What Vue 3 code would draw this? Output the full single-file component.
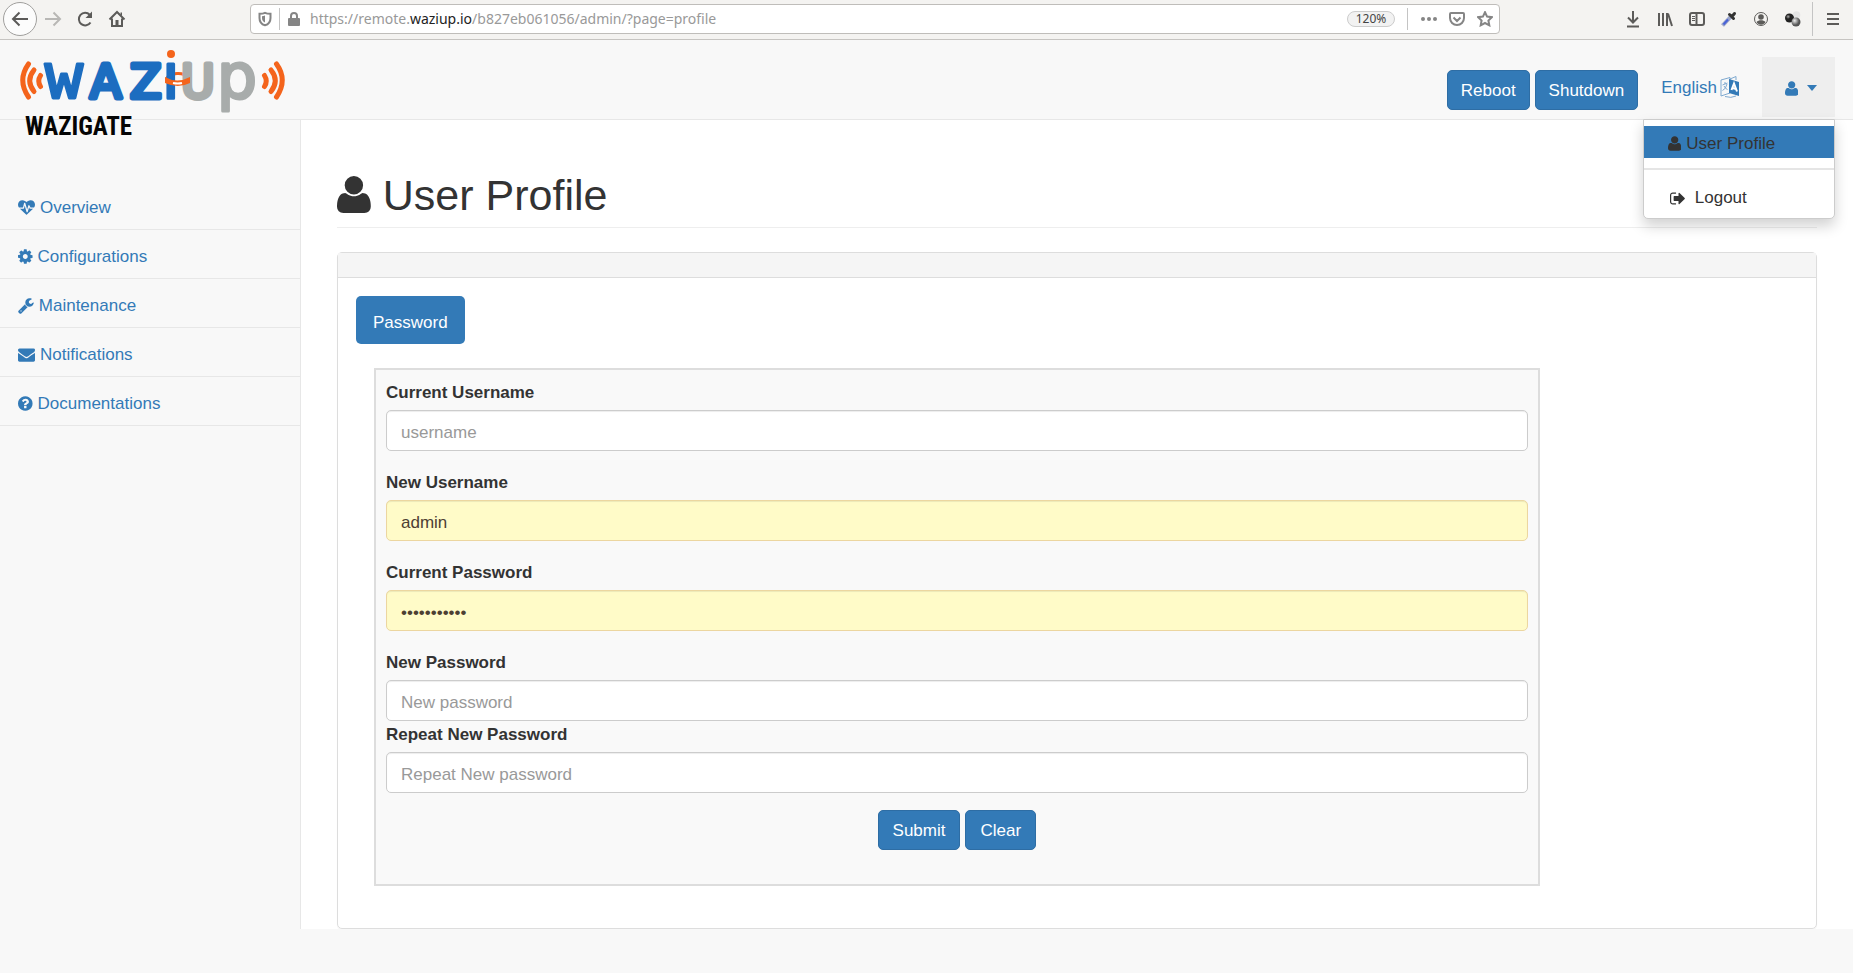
<script setup>
import { ref } from 'vue'

const icons = {
  user: {
    box: '192 0 1408 1792',
    d: 'M1600 1405q0 120-73 189.500t-194 69.500h-874q-121 0-194-69.500t-73-189.500q0-53 3.500-103.500t14-109 26.500-108.500 43-97.500 62-81 85.500-53.500 111.500-20q9 0 42 21.500t74.500 48 108 48 133.500 21.500 133.500-21.500 108-48 74.500-48 42-21.500q61 0 111.500 20t85.500 53.500 62 81 43 97.500 26.500 108.500 14 109 3.500 103.500zm-320-893q0 159-112.500 271.500t-271.500 112.500-271.500-112.500-112.500-271.500 112.500-271.500 271.500-112.500 271.500 112.500 112.500 271.500z',
  },
  logout: {
    box: '64 0 1664 1792',
    d: 'M704 1440q0 4 1 20t.5 26.5-3 23.5-10 19.5-20.5 6.5h-320q-119 0-203.5-84.5t-84.5-203.5v-704q0-119 84.5-203.5t203.5-84.5h320q13 0 22.5 9.5t9.5 22.5q0 4 1 20t.5 26.5-3 23.5-10 19.5-20.5 6.5h-320q-66 0-113 47t-47 113v704q0 66 47 113t113 47h312l11.5 1 11.5 3 8 5.5 7 9 2 13.5zm928-544q0 26-19 45l-544 544q-19 19-45 19t-45-19-19-45v-288h-448q-26 0-45-19t-19-45v-384q0-26 19-45t45-19h448v-288q0-26 19-45t45-19 45 19l544 544q19 19 19 45z',
  },
}

const links = [
  {
    label: 'Overview',
    box: '0 0 1792 1792',
    d: 'M1280 1024h305q-5 6-10 10.5t-9 7.5l-3 4-623 600q-18 18-44 18t-44-18l-624-602q-5-2-21-20h369q22 0 39.5-13.5t22.5-34.5l70-281 190 667q6 20 23 33t39 13q21 0 38-13t23-33l146-485 56 112q18 35 57 35zm512-428q0 145-103 300h-369l-111-221q-8-17-25.5-27t-36.5-8q-45 5-56 46l-129 430-196-686q-6-20-23.5-33t-39.5-13-39 13.5-22 34.5l-116 464h-423q-103-155-103-300 0-220 127-344t351-124q62 0 126.5 21.5t120 58 95.5 68.5 76 68q36-36 76-68t95.5-68.5 120-58 126.5-21.5q224 0 351 124t127 344z',
  },
  {
    label: 'Configurations',
    box: '128 0 1536 1792',
    d: 'M1152 896q0-106-75-181t-181-75-181 75-75 181 75 181 181 75 181-75 75-181zm512-109v222q0 12-8 23t-20 13l-185 28q-19 54-39 91 35 50 107 138 10 12 10 25t-9 23q-27 37-99 108t-94 71q-12 0-26-9l-138-108q-44 23-91 38-16 136-29 186-7 28-36 28h-222q-14 0-24.5-8.5t-11.5-21.5l-28-184q-49-16-90-37l-141 107q-10 9-25 9-14 0-25-11-126-114-165-168-7-10-7-23 0-12 8-23 15-21 51-66.5t54-70.5q-27-50-41-99l-183-27q-13-2-21-12.5t-8-23.5v-222q0-12 8-23t19-13l186-28q14-46 39-92-40-57-107-138-10-12-10-24 0-10 9-23 26-36 98.5-107.5t94.5-71.5q13 0 26 10l138 107q44-23 91-38 16-136 29-186 7-28 36-28h222q14 0 24.5 8.5t11.5 21.5l28 184q49 16 90 37l142-107q9-9 24-9 13 0 25 10 129 119 165 170 7 8 7 22 0 12-8 23-15 21-51 66.5t-54 70.5q26 50 41 98l183 28q13 2 21 12.5t8 23.5z',
  },
  {
    label: 'Maintenance',
    box: '64 0 1664 1792',
    d: 'M448 1472q0-26-19-45t-45-19-45 19-19 45 19 45 45 19 45-19 19-45zm644-420l-682 682q-37 37-90 37-52 0-91-37l-106-108q-38-36-38-90 0-53 38-91l681-681q39 98 114.5 173.5t173.5 114.5zm634-435q0 39-23 106-47 134-164.5 217.5t-258.5 83.5q-185 0-316.5-131.5t-131.5-316.5 131.5-316.5 316.5-131.5q58 0 121.5 16.5t107.5 46.5q16 11 16 28t-16 28l-293 169v224l193 107q5-3 79-48.5t135.5-81 70.5-35.5q15 0 23.5 10t8.5 25z',
  },
  {
    label: 'Notifications',
    box: '0 0 1792 1792',
    d: 'M1792 710v794q0 66-47 113t-113 47h-1472q-66 0-113-47t-47-113v-794q44 49 101 87 362 246 497 345 57 42 92.5 65.5t94.5 48 110 24.5h2q51 0 110-24.5t94.5-48 92.5-65.5q170-123 498-345 57-39 100-87zm0-294q0 79-49 151t-122 123q-376 261-468 325-10 7-42.5 31t-54 38.5-52 32.5-57.5 27-50 9h-2q-23 0-50-9t-57.5-27-52-32.5-54-38.5-42.5-31q-91-64-262-182.5t-205-142.5q-62-42-117-115.5t-55-136.5q0-78 41.5-130t118.5-52h1472q65 0 112.5 47t47.5 113z',
  },
  {
    label: 'Documentations',
    box: '128 0 1536 1792',
    d: 'M1024 1376v-192q0-14-9-23t-23-9h-192q-14 0-23 9t-9 23v192q0 14 9 23t23 9h192q14 0 23-9t9-23zm256-672q0-88-55.5-163t-138.5-116-170-41q-243 0-371 213-15 24 8 42l132 100q7 6 19 6 16 0 25-12 53-68 86-92 34-24 86-24 48 0 85.5 26t37.5 59q0 38-20 61t-68 45q-63 28-115.5 86.5t-52.5 125.5v36q0 14 9 23t23 9h192q14 0 23-9t9-23q0-19 21.5-49.5t54.5-49.5q32-18 49-28.5t46-35 44.5-48 28-60.5 12.5-81zm384 192q0 209-103 385.5t-279.5 279.5-385.5 103-385.5-103-279.5-279.5-103-385.5 103-385.5 279.5-279.5 385.5-103 385.5 103 279.5 279.5 103 385.5z',
  },
]

const form = ref({
  currentUsername: '',
  newUsername: 'admin',
  currentPassword: 'secretvalue',
  newPassword: '',
  repeatPassword: '',
})

const fields = [
  { key: 'currentUsername', label: 'Current Username', type: 'text', placeholder: 'username' },
  { key: 'newUsername', label: 'New Username', type: 'text', filled: true },
  { key: 'currentPassword', label: 'Current Password', type: 'password', filled: true },
  { key: 'newPassword', label: 'New Password', type: 'password', placeholder: 'New password', tight: true },
  { key: 'repeatPassword', label: 'Repeat New Password', type: 'password', placeholder: 'Repeat New password', tight: true },
]
</script>

<template>
  <div class="window">
    <header class="toolbar">
      <div class="tools">
        <button class="tool back" aria-label="Back">
          <svg width="18" height="18" viewBox="0 0 18 18"><path d="M17 9H2M8.5 2.500L2 9l6.500 6.500" /></svg>
        </button>
        <button class="tool faint" aria-label="Forward">
          <svg width="18" height="18" viewBox="0 0 18 18"><path d="M1 9h15M9.500 2.500L16 9l-6.500 6.500" /></svg>
        </button>
        <button class="tool" aria-label="Reload">
          <svg width="18" height="18" viewBox="0 0 18 18"><path d="M14.500 12.500A6.300 6.300 0 1 1 13.700 4.700" /><path class="solid" d="M16 1.500v6.500H9.500z" /></svg>
        </button>
        <button class="tool" aria-label="Home">
          <svg width="18" height="18" viewBox="0 0 18 18"><path d="M1.500 9.500L9 2l7.500 7.500M4 8.500v7.500h10V8.500" /><path class="solid" d="M7.500 10h3v6h-3zM12.500 2.500h1.500v3h-1.500z" /></svg>
        </button>
      </div>

      <div class="urlbar">
        <svg class="grey" width="14" height="16" viewBox="0 0 14 16"><path d="M7 1.800C5 2.800 3 2.800 1.500 2.800V7c0 4 2.500 6.500 5.500 7.300 3-.8 5.500-3.300 5.500-7.300V2.800C11 2.800 9 2.800 7 1.800z" /><path class="solid" d="M7 4.500v7C5 10.500 4 9 4 7V5.200c1 0 2-.2 3-.7z" /></svg>
        <span class="rule"></span>
        <svg class="grey lock" width="14" height="16" viewBox="0 0 14 16"><path d="M4 8V5a3 3 0 0 1 6 0v3" /><rect class="solid" x="1" y="7" width="12" height="8" rx="1" /></svg>
        <div class="url" role="textbox" aria-label="Address">https://remote.<b>waziup.io</b>/b827eb061056/admin/?page=profile</div>
        <button class="zoom">120%</button>
        <span class="rule"></span>
        <div class="page-tools">
          <svg class="grey" width="16" height="16" viewBox="0 0 16 16"><g class="solid"><circle cx="2" cy="8" r="2" /><circle cx="8" cy="8" r="2" /><circle cx="14" cy="8" r="2" /></g></svg>
          <svg class="grey" width="16" height="16" viewBox="0 0 16 16"><path d="M2 2h12a1 1 0 0 1 1 1v4a7 7 0 0 1-14 0V3a1 1 0 0 1 1-1zM4.500 6.500L8 10l3.500-3.500" /></svg>
          <svg class="grey" width="16" height="16" viewBox="0 0 16 16"><path d="M8 1.200l2.100 4.400 4.800.6-3.500 3.300.9 4.800L8 12l-4.300 2.300.9-4.800L1.100 6.200l4.800-.6z" /></svg>
        </div>
      </div>

      <div class="extras">
        <button class="extra" aria-label="Downloads"><svg width="16" height="18" viewBox="0 0 16 18"><path d="M8 1v11M3 7.500l5 5 5-5M2 16.500h12" /></svg></button>
        <button class="extra" aria-label="Library"><svg width="16" height="18" viewBox="0 0 16 18"><path d="M2 3v13M6 3v13M10 3v13M11 3.500l4 12.500" /></svg></button>
        <button class="extra" aria-label="Sidebars"><svg width="16" height="18" viewBox="0 0 16 18"><rect x="1" y="3" width="14" height="12" rx="2" /><path d="M7.500 3v12" /><path class="thin" d="M3 6.500h3M3 8.500h3M3 10.500h3" /></svg></button>
        <button class="extra" aria-label="Colour picker"><svg width="16" height="18" viewBox="0 0 16 18"><path class="glass" d="M1.500 15.500l8-8.500" /><path class="ink" d="M2.500 14.500l4.500-5" /><path class="grip" d="M8.500 4.500l4 4M11 6.500l2.500-3" /></svg></button>
        <button class="extra" aria-label="Account"><svg width="16" height="18" viewBox="0 0 16 18"><circle class="thin" cx="8" cy="9" r="6.500" /><circle class="solid" cx="8" cy="7" r="2.800" /><path class="solid" d="M3.500 12c2-2.500 7-2.500 9 0-2 3.500-7 3.500-9 0z" /></svg></button>
        <button class="extra" aria-label="Extension">
          <svg width="16" height="18" viewBox="0 0 16 18">
            <defs>
              <radialGradient id="dark" cx=".35" cy=".35"><stop offset="0" stop-color="#aaa" /><stop offset=".5" stop-color="#222" /></radialGradient>
              <radialGradient id="mid" cx=".35" cy=".35"><stop offset="0" stop-color="#eee" /><stop offset="1" stop-color="#555" /></radialGradient>
            </defs>
            <circle cx="11.500" cy="5" r="3.800" fill="#e4e4e4" stroke="none" /><circle cx="4.500" cy="8" r="4.500" fill="url(#dark)" stroke="none" /><circle cx="11" cy="12" r="4.500" fill="url(#mid)" stroke="none" />
          </svg>
        </button>
        <span class="rule tall"></span>
        <button class="extra menu-button" aria-label="Menu"><svg width="14" height="18" viewBox="0 0 14 18"><path d="M1 4h12M1 9h12M1 14h12" /></svg></button>
      </div>
    </header>

    <nav class="navbar">
      <a class="brand" href="#" aria-label="Waziup Wazigate">
        <svg width="270" height="100" viewBox="0 0 270 100">
          <defs><clipPath id="stem"><rect x="160" y="22" width="22" height="50" /></clipPath></defs>
          <g class="waves">
            <path d="M28.500 24Q17 40 28.500 57M34 30Q25.500 40.500 34 51.500M40.500 35.500Q37 41 40.500 46.500" />
            <path d="M276.500 24Q288 40 276.500 57M271 30Q279.500 40.500 271 51.500M264.500 35.500Q268 41 264.500 46.500" />
          </g>
          <path class="ring" d="M167 38q2-4 10-4.500t11 4.500" />
          <g class="blue">
            <text class="mono" x="45" y="58">w</text>
            <text class="caps" x="90" y="58">A</text>
            <text class="caps" x="130" y="58">Z</text>
            <text class="low" x="162" y="58" clip-path="url(#stem)">i</text>
          </g>
          <g class="ash">
            <text class="caps" x="181" y="58">U</text>
            <text class="low" x="217" y="58">p</text>
          </g>
          <path class="band" d="M165 37q12 7 25 0v6q-12 6-25 0z" />
          <path class="ring-shine" d="M173 43q5 1 9 0" />
          <circle class="dot" cx="171" cy="14" r="4" />
          <text class="gate" x="25" y="95">WAZIGATE</text>
        </svg>
      </a>
      <div class="actions">
        <button class="btn">Reboot</button>
        <button class="btn">Shutdown</button>
        <a class="language" href="#">English
          <svg width="20" height="22" viewBox="0 0 20 22">
            <path class="edge" d="M1 4l9-2.500V17L1 20zM10 3l6-2.500V4M5 20.500q6 2 11-.5" />
            <path class="edge" d="M2.500 9l5-2M5 6v2M7 8q-1 5-4.500 6.500M4 10q1.500 3 3.500 3.500" />
            <path d="M9 3l10 3v14l-10-3z" />
            <path class="cut" d="M11.500 14l2.500-6.500 3 8M12.500 12l3.500 1" />
          </svg>
        </a>
        <div class="account">
          <button class="toggle" aria-label="Account menu" aria-expanded="true">
            <svg class="icon" height="17" :viewBox="icons.user.box"><path :d="icons.user.d" /></svg>
            <span class="caret"></span>
          </button>
          <div class="dropdown">
            <a class="entry active" href="#"><svg class="icon" height="17" :viewBox="icons.user.box"><path :d="icons.user.d" /></svg>User Profile</a>
            <hr />
            <a class="entry out" href="#"><svg class="icon" height="17" :viewBox="icons.logout.box"><path :d="icons.logout.d" /></svg>Logout</a>
          </div>
        </div>
      </div>
    </nav>

    <div class="body">
      <aside class="sidebar">
        <a v-for="link in links" :key="link.label" class="side-link" href="#">
          <svg class="icon" height="17" :viewBox="link.box"><path :d="link.d" /></svg>{{ link.label }}
        </a>
      </aside>

      <main class="content">
        <h1><svg class="icon" height="43" :viewBox="icons.user.box"><path :d="icons.user.d" /></svg>User Profile</h1>
        <section class="panel">
          <div class="panel-head"></div>
          <div class="panel-body">
            <button class="tab">Password</button>
            <div class="column">
              <form class="box" @submit.prevent>
                <div v-for="f in fields" :key="f.key" class="field" :class="{ tight: f.tight }">
                  <label :for="f.key">{{ f.label }}</label>
                  <input :id="f.key" v-model="form[f.key]" :type="f.type" :placeholder="f.placeholder" :class="{ filled: f.filled }" />
                </div>
                <div class="buttons">
                  <button class="btn" type="submit">Submit</button>
                  <button class="btn" type="reset">Clear</button>
                </div>
              </form>
            </div>
          </div>
        </section>
      </main>
    </div>
  </div>
</template>

<style>
body {
  background: #f8f8f8;
}
</style>

<style scoped>
.window {
  font: 17px/24px "Liberation Sans", Arial, sans-serif;
  color: #333;
}
.window *,
.window *::before {
  box-sizing: border-box;
}
button {
  font: inherit;
  cursor: pointer;
}
a {
  color: #337ab7;
  text-decoration: none;
}

/* Browser toolbar */
.toolbar {
  display: flex;
  align-items: center;
  height: 40px;
  padding-bottom: 2px;
  background: #f4f3f1;
  border-bottom: 1px solid #c6c4c1;
}
.toolbar svg {
  display: block;
  fill: none;
  stroke: #5c5b59;
  stroke-width: 2;
}
.toolbar svg .solid {
  fill: #5c5b59;
  stroke: none;
}
.toolbar svg .thin {
  stroke-width: 1;
}
.toolbar svg.grey {
  stroke: #858585;
}
.toolbar svg.grey .solid {
  fill: #858585;
}
.toolbar .faint svg {
  stroke: #b8b7b5;
}
.toolbar .glass {
  stroke: #9aa4c8;
  stroke-width: 4;
}
.toolbar .ink {
  stroke: #4862d8;
}
.toolbar .grip {
  stroke: #333;
  stroke-width: 3;
  stroke-linecap: round;
}
.tools {
  display: flex;
  align-items: center;
  width: 250px;
  padding-left: 3px;
}
.tool {
  display: grid;
  place-items: center;
  width: 32px;
  height: 34px;
  padding: 0;
  border: 0;
  background: none;
}
.tool.back {
  width: 34px;
  border: 1px solid #a09f9d;
  border-radius: 50%;
  background: #fcfcfc;
}
.urlbar {
  display: flex;
  flex: 1;
  align-items: center;
  height: 30px;
  padding: 0 6px 0 7px;
  border: 1px solid #bfbdba;
  border-radius: 4px;
  background: #fff;
}
.rule {
  width: 1px;
  height: 22px;
  margin: 0 7px;
  background: #c4c4c4;
}
.rule.tall {
  height: 34px;
  margin: 0 4px 0 3px;
}
.url {
  flex: 1;
  margin-left: 9px;
  font: 14px/20px "Noto Sans", sans-serif;
  color: #999;
  white-space: nowrap;
}
.url b {
  font-weight: 400;
  color: #222;
}
.zoom {
  width: 48px;
  height: 16px;
  margin-right: 5px;
  padding: 0;
  border: 1px solid #ccc;
  border-radius: 8px;
  background: #f2f2f2;
  color: #444;
  font: 12px/14px "Noto Sans", sans-serif;
}
.page-tools {
  display: flex;
  gap: 12px;
  padding-left: 6px;
}
.extras {
  display: flex;
  align-items: center;
  justify-content: flex-end;
  width: 353px;
  padding-right: 4px;
}
.extra {
  display: grid;
  place-items: center;
  width: 32px;
  height: 32px;
  padding: 0;
  border: 0;
  background: none;
}

/* Site header */
.navbar {
  display: flex;
  justify-content: space-between;
  height: 80px;
  border-bottom: 1px solid #e7e7e7;
  padding-right: 18px;
}
.brand {
  height: 100px;
  z-index: 1;
}
.brand svg {
  display: block;
  overflow: visible;
}
.waves path,
.ring {
  fill: none;
  stroke: #f4641c;
  stroke-linecap: round;
  stroke-width: 5;
}
.ring {
  stroke-width: 3;
}
.ring-shine {
  fill: none;
  stroke: #fff;
  stroke-width: 2;
}
.dot,
.band {
  fill: #f4641c;
}
.blue {
  fill: #1c6dc0;
  stroke: #1c6dc0;
}
.ash {
  fill: #a8acab;
  stroke: #a8acab;
}
.mono,
.caps,
.low {
  stroke-width: 3;
  stroke-linejoin: round;
}
.mono {
  font: 63px "DejaVu Sans Mono", monospace;
}
.caps {
  font: 46px "DejaVu Sans", sans-serif;
  stroke-width: 5;
}
.low {
  font: 63px "DejaVu Sans", sans-serif;
}
.gate {
  fill: #050505;
  font: bold 25px "Liberation Sans Narrow", "Roboto Condensed", "Liberation Sans", sans-serif;
}
.actions {
  display: flex;
  gap: 5px;
  padding-top: 17px;
}
.btn {
  height: 40px;
  padding: 2px 14px 0;
  border: 1px solid #2e6da4;
  border-radius: 5px;
  background: #337ab7;
  color: #fff;
}
.actions > .btn {
  margin-top: 13px;
  padding: 2px 13px 0;
}
.language {
  display: flex;
  gap: 3px;
  margin: 19px 17px 0 18px;
}
.language svg {
  fill: #337ab7;
}
.language .edge {
  fill: none;
  stroke: #7fa9d0;
}
.language .cut {
  fill: none;
  stroke: #fff;
  stroke-width: 2;
}
.account {
  position: relative;
}
.toggle {
  display: flex;
  align-items: center;
  justify-content: center;
  gap: 9px;
  width: 73px;
  height: 60px;
  padding: 2px 0 0 5px;
  border: 0;
  background: #eee;
  color: #337ab7;
}
.icon {
  fill: currentColor;
}
.caret {
  border: 5px solid transparent;
  border-top: 6px solid currentColor;
  border-bottom: 0;
}
.dropdown {
  position: absolute;
  top: 62px;
  right: 0;
  z-index: 2;
  width: 192px;
  padding: 6px 0 2px;
  border: 1px solid #ccc;
  border-radius: 0 0 5px 5px;
  background: #fff;
  box-shadow: 0 7px 14px rgba(0, 0, 0, 0.18);
}
.entry {
  display: flex;
  align-items: center;
  gap: 5px;
  height: 32px;
  padding: 3px 24px 0;
  color: #333;
}
.entry.active {
  background: #337ab7;
}
.entry.out {
  gap: 9px;
  height: 36px;
  padding: 0 26px;
}
.dropdown hr {
  height: 2px;
  margin: 10px 0;
  border: 0;
  background: #e5e5e5;
}

/* Sidebar and content */
.body {
  display: flex;
}
.sidebar {
  width: 300px;
  padding-top: 61px;
}
.side-link {
  display: flex;
  align-items: center;
  gap: 5px;
  height: 49px;
  padding: 5px 18px 0;
  border-bottom: 1px solid #e7e7e7;
}
.content {
  flex: 1;
  padding: 48px 36px 0;
  border-left: 1px solid #e7e7e7;
  background: #fff;
}
h1 {
  display: flex;
  align-items: center;
  gap: 12px;
  height: 60px;
  margin: 0 0 24px;
  padding-bottom: 6px;
  border-bottom: 1px solid #eee;
  font-size: 43px;
  font-weight: 400;
  line-height: 48px;
}
.panel {
  border: 1px solid #ddd;
  border-radius: 5px;
  box-shadow: 0 1px 1px rgba(0, 0, 0, 0.05);
}
.panel-head {
  height: 25px;
  border-bottom: 1px solid #ddd;
  background: #f5f5f5;
}
.panel-body {
  padding: 18px 18px 42px;
}
.tab {
  display: block;
  height: 48px;
  padding: 5px 17px 0;
  border: 0;
  border-radius: 5px;
  background: #337ab7;
  color: #fff;
}
.column {
  width: 83.3333%;
  padding: 24px 18px 0;
}
.box {
  padding: 11px 10px 34px;
  border: 2px solid #ddd;
  background: #f9f9f9;
}
.field {
  margin-bottom: 20px;
}
.field.tight {
  margin-bottom: 2px;
}
label {
  display: block;
  margin-bottom: 5px;
  font-weight: 700;
}
input {
  display: block;
  width: 100%;
  height: 41px;
  padding: 4px 14px 0;
  border: 1px solid #ccc;
  border-radius: 5px;
  background: #fff;
  box-shadow: inset 0 1px 1px rgba(0, 0, 0, 0.075);
  color: #555;
  font: inherit;
}
input::placeholder {
  color: #999;
}
input.filled {
  border-color: #ecd6a0;
  background: #fffbc8;
  color: #4d4033;
}
.buttons {
  display: flex;
  justify-content: center;
  gap: 5px;
  padding-top: 15px;
}
</style>
